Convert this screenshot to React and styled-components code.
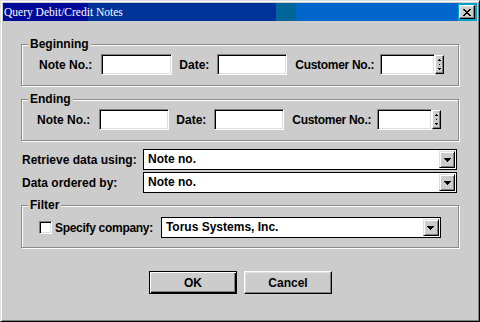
import React from 'react'
import styled, { createGlobalStyle, css } from 'styled-components'

const GlobalStyle = createGlobalStyle`
  html, body {
    margin: 0;
    padding: 0;
    background: #cccccc;
  }
  body {
    font-family: "Liberation Sans", Arial, sans-serif;
  }
`

const Window = styled.div`
  box-sizing: border-box;
  width: 480px;
  height: 322px;
  background: #cccccc;
  border: 1px solid;
  border-color: #dfdfdf #000 #000 #dfdfdf;
  box-shadow: inset 1px 1px 0 #fff, inset -1px -1px 0 #808080;
  padding: 2px;
  display: flex;
  flex-direction: column;
`

const TitleBar = styled.div`
  height: 18px;
  flex: none;
  display: flex;
  align-items: center;
  justify-content: space-between;
  background: linear-gradient(
    to right,
    #000a99 0 85px,
    #003399 85px 273px,
    #006699 273px 293px,
    #0066cc 293px 455px,
    #00a0cc 455px
  );
`

const Title = styled.span`
  color: #fff;
  font-family: "Liberation Serif", "Times New Roman", serif;
  font-size: 11.5px;
  line-height: 18px;
  padding-left: 1px;
`

const CloseButton = styled.button`
  box-sizing: border-box;
  width: 16px;
  height: 14px;
  margin: 0 2px 0 0;
  padding: 0;
  background: #cccccc;
  border: 1px solid;
  border-color: #fff #000 #000 #fff;
  box-shadow: inset -1px -1px 0 #808080, inset 1px 1px 0 #dfdfdf;
  display: flex;
  align-items: center;
  justify-content: center;
`

const Client = styled.div`
  flex: 1;
  display: flex;
  flex-direction: column;
  padding: 16px 18px 0 18px;
`

const Group = styled.fieldset`
  margin: ${p => p.$top || 0}px 0 ${p => p.$bottom || 0}px 0;
  padding: ${p => p.$pt}px 0 ${p => p.$pb}px 0;
  border: 1px solid #8a8a8a;
  box-shadow: inset 1px 1px 0 #fff, 1px 1px 0 #fff;
  min-width: 0;
`

const Legend = styled.legend`
  margin-left: 6px;
  padding: 0 2px;
  font-size: 12px;
  font-weight: bold;
  line-height: 14px;
  color: #000;
  background: #cccccc;
`

const FieldRow = styled.div`
  display: flex;
  align-items: center;
  padding-left: ${p => p.$indent}px;
`

const Label = styled.label`
  font-size: 12px;
  font-weight: bold;
  color: #000;
  white-space: nowrap;
  margin: 0 ${p => p.$mr || 0}px 0 ${p => p.$ml || 0}px;
  letter-spacing: ${p => (p.$tight ? '-0.3px' : 'normal')};
`

const TextBox = styled.input`
  box-sizing: border-box;
  width: ${p => p.$w}px;
  height: 21px;
  margin: 0;
  padding: 0 2px;
  background: #fff;
  border: 1px solid;
  border-color: #808080 #fff #fff #808080;
  box-shadow: inset 1px 1px 0 #000, inset -1px -1px 0 #dfdfdf;
  font: bold 12px "Liberation Sans", Arial, sans-serif;
  outline: none;
`

const Spinner = styled.div`
  box-sizing: border-box;
  width: 9px;
  height: 19px;
  margin-left: ${p => p.$ml || 0}px;
  background: #cccccc;
  border: 1px solid;
  border-color: #fff #000 #000 #fff;
  box-shadow: inset -1px -1px 0 #808080;
  display: flex;
  align-items: center;
  justify-content: center;
`

const DataRow = styled.div`
  display: grid;
  grid-template-columns: 121px 1fr;
  align-items: center;
  padding: 0 2px 0 1px;
  margin-top: ${p => p.$mt || 0}px;
`

const Combo = styled.div`
  box-sizing: border-box;
  width: ${p => (p.$w ? `${p.$w}px` : 'auto')};
  height: 21px;
  display: flex;
  align-items: stretch;
  padding: 1px;
  background: #fff;
  border: 1px solid #000;
`

const ComboText = styled.span`
  flex: 1;
  padding-left: 3px;
  font-size: 12px;
  font-weight: bold;
  line-height: 17px;
  color: #000;
  white-space: nowrap;
`

const ComboButton = styled.span`
  box-sizing: border-box;
  width: 16px;
  background: #cccccc;
  border: 1px solid;
  border-color: #dfdfdf #000 #000 #dfdfdf;
  box-shadow: inset 1px 1px 0 #fff, inset -1px -1px 0 #808080;
  display: flex;
  align-items: center;
  justify-content: center;
`

const CheckBox = styled.span`
  box-sizing: border-box;
  width: 13px;
  height: 13px;
  background: #fff;
  border: 1px solid;
  border-color: #808080 #fff #fff #808080;
  box-shadow: inset 1px 1px 0 #000, inset -1px -1px 0 #dfdfdf;
`

const ButtonRow = styled.div`
  display: flex;
  justify-content: center;
  gap: 7px;
  margin-top: 23px;
  padding-left: 1px;
`

const Button = styled.button`
  box-sizing: border-box;
  width: 88px;
  height: 23px;
  margin: 0;
  padding: 0;
  background: #cccccc;
  font: bold 12px "Liberation Sans", Arial, sans-serif;
  color: #000;
  border: 1px solid;
  border-color: #fff #000 #000 #fff;
  box-shadow: inset -1px -1px 0 #808080, inset 1px 1px 0 #dfdfdf;
  ${p =>
    p.$default &&
    css`
      border-color: #000;
      box-shadow: inset 1px 1px 0 #fff, inset -1px -1px 0 #000, inset -2px -2px 0 #808080;
    `}
`

const closePixels = [
  [0, 2, 6, 2],
  [1, 2, 5, 2],
  [2, 4],
  [3, 2],
  [2, 4],
  [1, 2, 5, 2],
  [0, 2, 6, 2],
]

const CloseIcon = () => (
  <svg width="8" height="7" viewBox="0 0 8 7" shapeRendering="crispEdges">
    {closePixels.map((row, y) => {
      const rects = []
      for (let i = 0; i < row.length; i += 2) {
        rects.push(<rect key={i} x={row[i]} y={y} width={row[i + 1]} height="1" fill="#000" />)
      }
      return rects
    })}
  </svg>
)

const SpinIcon = () => (
  <svg width="7" height="17" viewBox="0 0 7 17" shapeRendering="crispEdges">
    <rect x="3" y="3" width="1" height="1" fill="#000" />
    <rect x="2" y="4" width="3" height="1" fill="#000" />
    <rect x="3" y="8" width="1" height="1" fill="#000" />
    <rect x="2" y="12" width="3" height="1" fill="#000" />
    <rect x="3" y="13" width="1" height="1" fill="#000" />
  </svg>
)

const ArrowIcon = () => (
  <svg width="7" height="4" viewBox="0 0 7 4" shapeRendering="crispEdges">
    <path d="M0 0h7v1H0zM1 1h5v1H1zM2 2h3v1H2zM3 3h1v1H3z" fill="#000" />
  </svg>
)

const Dropdown = ({ value, width }) => (
  <Combo $w={width}>
    <ComboText>{value}</ComboText>
    <ComboButton>
      <ArrowIcon />
    </ComboButton>
  </Combo>
)

const RangeRow = ({ indent, noteW, dateW, custW }) => (
  <FieldRow $indent={indent}>
    <Label $mr={9}>Note No.:</Label>
    <TextBox $w={noteW} />
    <Label $ml={7} $mr={8}>Date:</Label>
    <TextBox $w={dateW} />
    <Label $ml={8} $mr={6} $tight>Customer No.:</Label>
    <TextBox $w={custW} />
    <Spinner>
      <SpinIcon />
    </Spinner>
  </FieldRow>
)

export default function App() {
  return (
    <>
      <GlobalStyle />
      <Window>
        <TitleBar>
          <Title>Query Debit/Credit Notes</Title>
          <CloseButton aria-label="Close">
            <CloseIcon />
          </CloseButton>
        </TitleBar>
        <Client>
          <Group $pt={3} $pb={10} $bottom={6}>
            <Legend>Beginning</Legend>
            <RangeRow indent={17} noteW={71} dateW={70} custW={55} />
          </Group>
          <Group $pt={3} $pb={10}>
            <Legend>Ending</Legend>
            <RangeRow indent={15} noteW={70} dateW={70} custW={55} />
          </Group>
          <DataRow $mt={8}>
            <Label>Retrieve data using:</Label>
            <Dropdown value="Note no." />
          </DataRow>
          <DataRow $mt={2}>
            <Label>Data ordered by:</Label>
            <Dropdown value="Note no." />
          </DataRow>
          <Group $pt={5} $pb={9} $top={5}>
            <Legend>Filter</Legend>
            <FieldRow $indent={17}>
              <CheckBox />
              <Label $ml={3} $mr={8} $tight>Specify company:</Label>
              <Dropdown value="Torus Systems, Inc." width={280} />
            </FieldRow>
          </Group>
          <ButtonRow>
            <Button $default>OK</Button>
            <Button>Cancel</Button>
          </ButtonRow>
        </Client>
      </Window>
    </>
  )
}
